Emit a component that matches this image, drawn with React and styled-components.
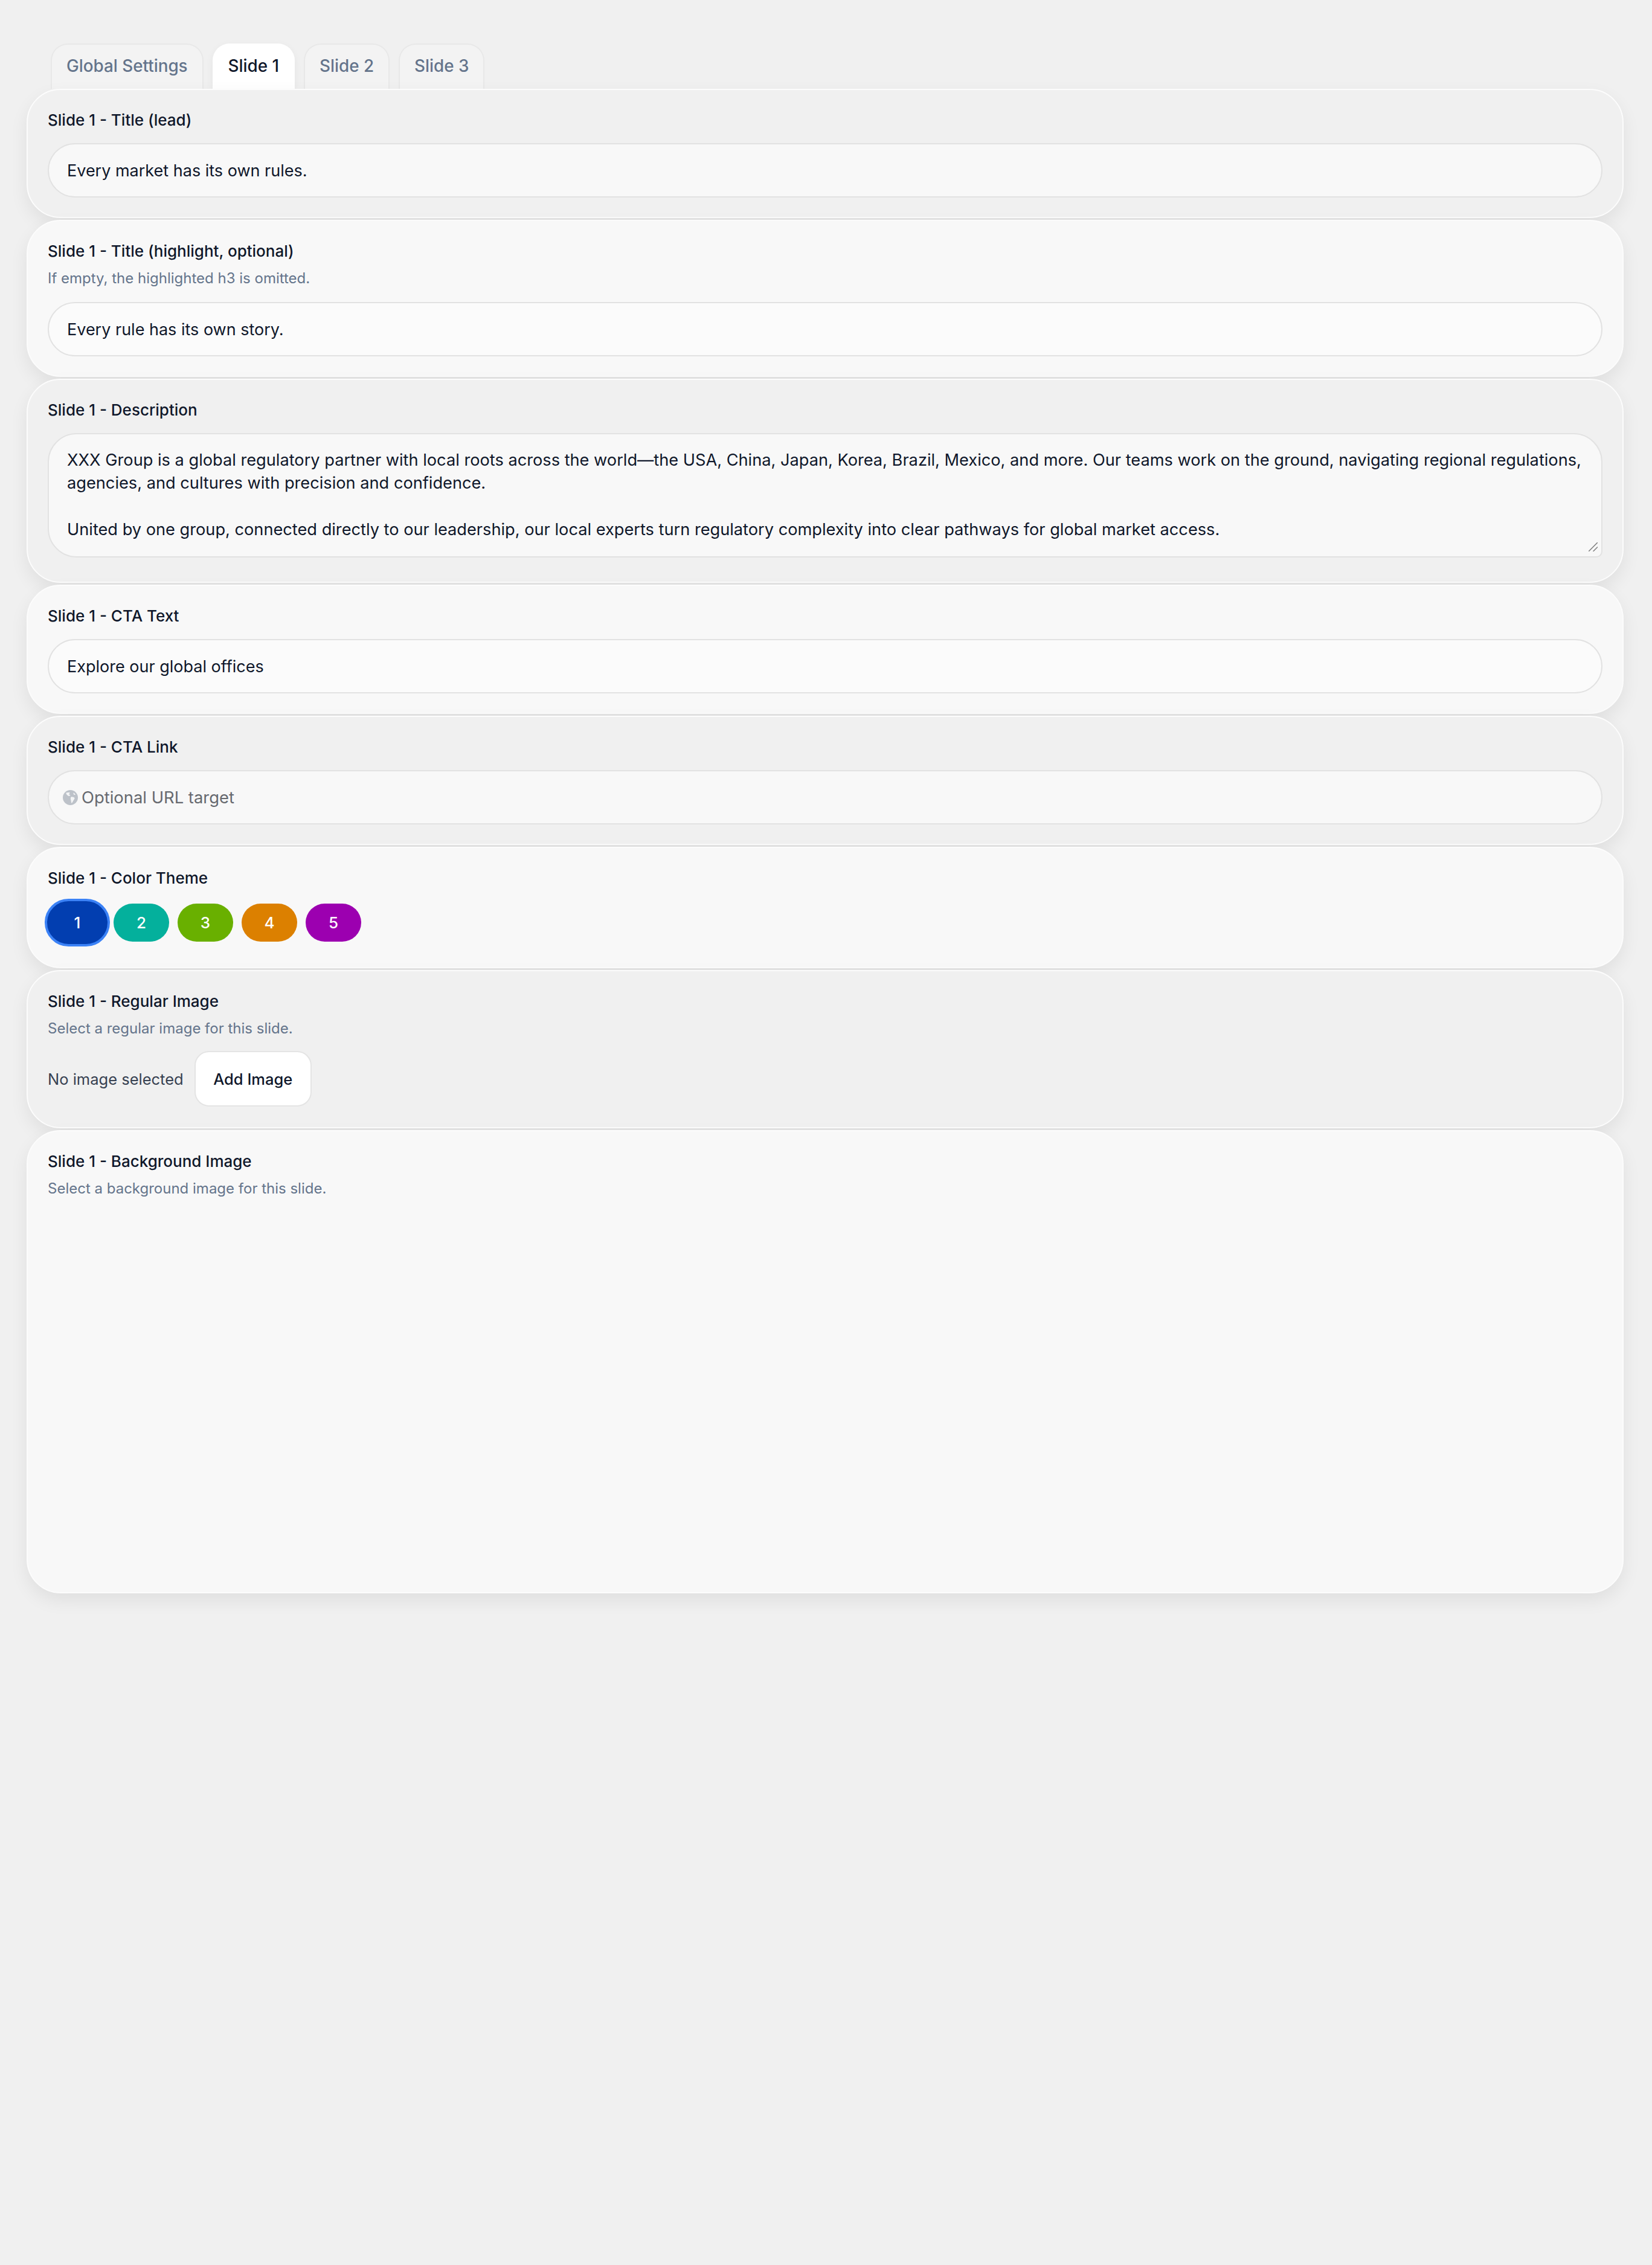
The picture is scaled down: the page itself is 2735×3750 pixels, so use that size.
import styled, { createGlobalStyle } from "styled-components";

const GlobalStyle = createGlobalStyle`
  html, body {
    margin: 0;
    min-height: 3750px;
    background: #f0f0f0;
    font-family: Inter, "Liberation Sans", sans-serif;
    color: #0f172a;
  }
  * { box-sizing: border-box; }
`;

const Page = styled.div`
  padding: 72px 47px 0 44px;
`;

const TabBar = styled.div`
  display: flex;
  gap: 15px;
  padding-left: 40px;
  height: 75px;
`;

const Tab = styled.div`
  display: flex;
  align-items: center;
  justify-content: center;
  height: 75px;
  padding: 0 24px 3px;
  border: 2px solid #e8e8e8;
  border-bottom: 0;
  border-radius: 28px 28px 0 0;
  background: ${(p) => (p.$active ? "#ffffff" : "#f3f3f3")};
  border-color: ${(p) => (p.$active ? "#ffffff" : "#e8e8e8")};
  color: ${(p) => (p.$active ? "#0f172a" : "#64748b")};
  font-size: 27.8px;
  font-weight: 500;
  box-shadow: ${(p) => (p.$active ? "0 4px 14px rgba(0,0,0,0.05)" : "none")};
`;

const Cards = styled.div`
  display: flex;
  flex-direction: column;
  gap: 3px;
`;

const Card = styled.section`
  padding: 34px 33px 32px;
  min-height: ${(p) => p.$minHeight || 0}px;
  border: 2px solid #fcfcfc;
  border-radius: 56px;
  background: ${(p) => (p.$alt ? "#f0f0f0" : "#f8f8f8")};
  box-shadow: 0 12px 30px rgba(0, 0, 0, 0.07);
`;

const Label = styled.div`
  font-size: 26px;
  line-height: 32px;
  font-weight: 500;
  color: #0f172a;
  margin-bottom: 22px;
`;

const Hint = styled.div`
  font-size: 24px;
  line-height: 30px;
  color: #64748b;
  margin: -8px 0 24px;
`;

const TextInput = styled.input`
  display: block;
  width: 100%;
  height: 90px;
  padding: 0 30px;
  border: 2px solid #e2e2e2;
  border-radius: 45px;
  outline: none;
  background: ${(p) => (p.$alt ? "#f8f8f8" : "#fbfbfb")};
  font: 400 27px Inter, "Liberation Sans", sans-serif;
  color: #0f172a;
`;

const AreaWrap = styled.div`
  position: relative;
  margin-bottom: 8px;
`;

const TextArea = styled.textarea`
  display: block;
  width: 100%;
  height: 206px;
  padding: 24px 30px;
  border: 2px solid #e2e2e2;
  border-radius: 48px 48px 10px 48px;
  outline: none;
  background: #f8f8f8;
  font: 400 27.2px/38.3px Inter, "Liberation Sans", sans-serif;
  color: #0f172a;
  resize: none;
`;

const Grip = styled.svg`
  position: absolute;
  right: 8px;
  bottom: 10px;
  width: 15px;
  height: 15px;
`;

const UrlField = styled.div`
  display: flex;
  align-items: center;
  gap: 6px;
  height: 90px;
  padding: 0 23px;
  border: 2px solid #e2e2e2;
  border-radius: 45px;
  background: #f8f8f8;
`;

const UrlInput = styled.input`
  flex: 1;
  border: 0;
  padding: 0;
  outline: none;
  background: transparent;
  font: 400 27.4px Inter, "Liberation Sans", sans-serif;
  &::placeholder { color: #66696f; opacity: 1; }
`;

const Swatches = styled.div`
  display: flex;
  align-items: center;
  gap: 14px;
  height: 79px;
  margin: -4px 0 2px 3px;
`;

const Swatch = styled.button`
  width: ${(p) => (p.$selected ? 108 : 92)}px;
  height: ${(p) => (p.$selected ? 79 : 63)}px;
  margin: ${(p) => (p.$selected ? "0 -8px" : "0")};
  padding: 0;
  border: ${(p) => (p.$selected ? "4px solid #3b82f6" : "0")};
  border-radius: 40px;
  background: ${(p) => p.$color};
  color: #ffffff;
  font: 500 26px Inter, "Liberation Sans", sans-serif;
`;

const ImageRow = styled.div`
  display: flex;
  align-items: center;
  gap: 18px;
  margin-top: -2px;
  padding-bottom: 2px;
`;

const ImageStatus = styled.span`
  font-size: 25.5px;
  color: #374151;
`;

const AddButton = styled.button`
  width: 194px;
  height: 92px;
  padding: 0;
  border: 2px solid #e4e4e4;
  border-radius: 24px;
  background: #ffffff;
  color: #0f172a;
  font: 500 25.5px Inter, "Liberation Sans", sans-serif;
`;

function Globe() {
  return (
    <svg width="25" height="25" viewBox="0 0 24 24" aria-hidden="true">
      <circle cx="12" cy="12" r="12" fill="#bdc2c9" />
      <path
        fill="#f4f5f6"
        d="M5 4.5c2-.6 4.2-1 6-.4.6 1.2-.6 2-1.6 2.4.6 1 2 .8 2.6 1.8-.4 1-1.8.6-2.6 1.2-1.4-.4-2.6-1.6-3.6-2.8zM13 11c2-.6 4.6.2 5.8 1.6-.2 2-1.6 3-2.4 4.6-.6 1.4-1.2 3-2.6 3.6-.8-1.6-.4-3.2-1-4.8-.4-1.4-.8-3.4.2-5zM17 4c1.2.8 2.4 2 3 3.4-1 .4-2 .2-2.8-.4-.4-1-.4-2-.2-3z"
      />
    </svg>
  );
}

const tabs = ["Global Settings", "Slide 1", "Slide 2", "Slide 3"];
const colors = ["#023eb0", "#04b09c", "#69b000", "#dc8000", "#9c00b0"];
const description = `XXX Group is a global regulatory partner with local roots across the world—the USA, China, Japan, Korea, Brazil, Mexico, and more. Our teams work on the ground, navigating regional regulations, agencies, and cultures with precision and confidence.

United by one group, connected directly to our leadership, our local experts turn regulatory complexity into clear pathways for global market access.`;

export default function App() {
  return (
    <Page>
      <GlobalStyle />
      <TabBar>
        {tabs.map((tab) => (
          <Tab key={tab} $active={tab === "Slide 1"}>
            {tab}
          </Tab>
        ))}
      </TabBar>
      <Cards>
        <Card $alt>
          <Label>Slide 1 - Title (lead)</Label>
          <TextInput $alt readOnly value="Every market has its own rules." />
        </Card>
        <Card>
          <Label>Slide 1 - Title (highlight, optional)</Label>
          <Hint>If empty, the highlighted h3 is omitted.</Hint>
          <TextInput readOnly value="Every rule has its own story." />
        </Card>
        <Card $alt>
          <Label>Slide 1 - Description</Label>
          <AreaWrap>
            <TextArea readOnly value={description} />
            <Grip viewBox="0 0 15 15" aria-hidden="true">
              <path d="M0 15L15 0M7.5 15L15 7.5" stroke="#7d7d7d" strokeWidth="1.5" />
            </Grip>
          </AreaWrap>
        </Card>
        <Card>
          <Label>Slide 1 - CTA Text</Label>
          <TextInput readOnly value="Explore our global offices" />
        </Card>
        <Card $alt>
          <Label>Slide 1 - CTA Link</Label>
          <UrlField>
            <Globe />
            <UrlInput readOnly placeholder="Optional URL target" />
          </UrlField>
        </Card>
        <Card>
          <Label>Slide 1 - Color Theme</Label>
          <Swatches>
            {colors.map((color, index) => (
              <Swatch key={color} $color={color} $selected={index === 0}>
                {index + 1}
              </Swatch>
            ))}
          </Swatches>
        </Card>
        <Card $alt>
          <Label>Slide 1 - Regular Image</Label>
          <Hint>Select a regular image for this slide.</Hint>
          <ImageRow>
            <ImageStatus>No image selected</ImageStatus>
            <AddButton>Add Image</AddButton>
          </ImageRow>
        </Card>
        <Card $minHeight={767}>
          <Label>Slide 1 - Background Image</Label>
          <Hint>Select a background image for this slide.</Hint>
        </Card>
      </Cards>
    </Page>
  );
}
